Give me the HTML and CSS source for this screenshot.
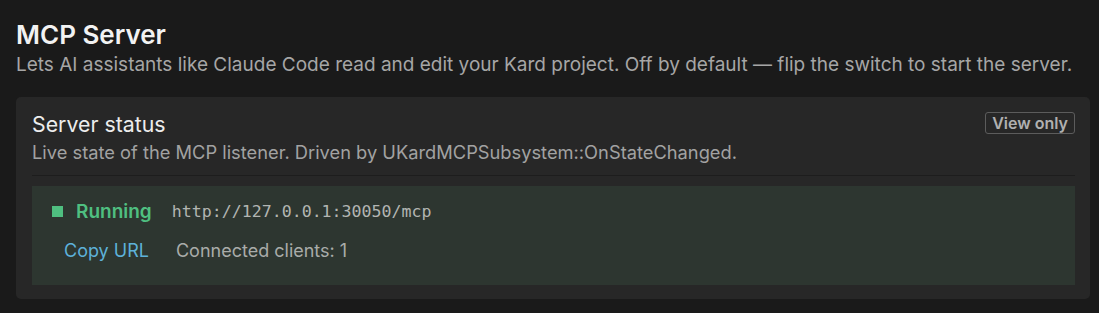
FILE: index.html
```html
<!DOCTYPE html>
<html>
<head>
<meta charset="utf-8">
<link rel="stylesheet" href="styles.css">
</head>
<body>
<div class="page">
  <h1 class="title">MCP Server</h1>
  <p class="subtitle">Lets AI assistants like Claude Code read and edit your Kard project. Off by default — flip the switch to start the server.</p>
  <section class="card">
    <div class="card-head">
      <div>
        <h2 class="card-title">Server status</h2>
        <p class="card-desc">Live state of the MCP listener. Driven by UKardMCPSubsystem::OnStateChanged.</p>
      </div>
      <span class="badge">View only</span>
    </div>
    <div class="divider"></div>
    <div class="status">
      <div class="status-row">
        <span class="dot"></span>
        <span class="running">Running</span>
        <span class="url">http://127.0.0.1:30050/mcp</span>
      </div>
      <div class="status-row second">
        <a class="copy">Copy URL</a>
        <span class="clients">Connected clients: 1</span>
      </div>
    </div>
  </section>
</div>
</body>
</html>
```
FILE: styles.css
```css
html, body {
  margin: 0;
  padding: 0;
  background: #1a1a1a;
}
body {
  font-family: Inter, "Noto Sans", sans-serif;
  color: #e8e8e8;
}
.page {
  padding: 18.5px 9px 0 16px;
}
.title {
  margin: 0;
  font-size: 26px;
  font-weight: 600;
  line-height: 32px;
  color: #f2f2f2;
}
.subtitle {
  margin: 2.5px 0 0;
  font-size: 19px;
  line-height: 24px;
  color: #a6a6a6;
}
.card {
  margin-top: 20px;
  background: #272727;
  border-radius: 5px;
  padding: 12.5px 15px 14px 16px;
}
.card-head {
  display: flex;
  justify-content: space-between;
  align-items: flex-start;
}
.card-title {
  margin: 0;
  font-size: 21.3px;
  font-weight: 400;
  line-height: 28px;
  color: #ededed;
}
.card-desc {
  margin: 2px 0 0;
  font-size: 18.3px;
  line-height: 24px;
  color: #a2a2a2;
}
.badge {
  margin-top: 2.5px;
  border: 1px solid #5c5c5c;
  border-radius: 3px;
  padding: 0 6px;
  font-size: 16px;
  font-weight: 600;
  line-height: 20px;
  color: #b0b0b0;
}
.divider {
  margin-top: 11.5px;
  height: 1px;
  background: #1d1d1d;
}
.status {
  margin-top: 10px;
  background: #2d3630;
  padding: 13.5px 20px 22.5px;
  display: flex;
  flex-direction: column;
  gap: 15px;
}
.status-row {
  display: flex;
  align-items: center;
  height: 24px;
}
.dot {
  width: 11px;
  height: 11px;
  background: #4fbf80;
  margin-right: 13px;
}
.running {
  font-size: 19px;
  font-weight: 600;
  color: #4fbf80;
  line-height: 24px;
}
.url {
  margin-left: 20px;
  font-family: "DejaVu Sans Mono", monospace;
  font-size: 16.6px;
  line-height: 24px;
  color: #b2b5b2;
}
.second {
  padding-left: 12px;
}
.copy {
  font-size: 18px;
  line-height: 24px;
  color: #5db1d9;
}
.clients {
  margin-left: 27px;
  font-size: 18px;
  line-height: 24px;
  color: #a9aca9;
}
```
